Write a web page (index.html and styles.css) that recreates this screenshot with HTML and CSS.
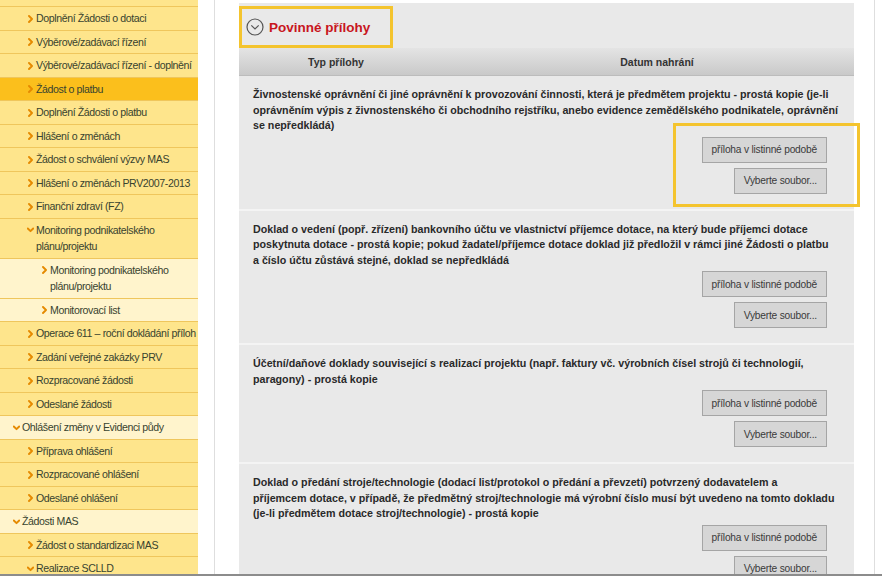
FILE: index.html
```html
<!DOCTYPE html>
<html lang="cs">
<head>
<meta charset="utf-8">
<title>Povinné přílohy</title>
<link rel="stylesheet" href="styles.css">
</head>
<body>
<div class="screen">
  <nav class="sidebar">
    <ul class="menu">
      <li class="item lvl1"><svg class="chev" viewBox="0 0 7 8"><polyline points="2,1 5,4 2,7"/></svg><span>Žádost o dotaci</span></li>
      <li class="item lvl1"><svg class="chev" viewBox="0 0 7 8"><polyline points="2,1 5,4 2,7"/></svg><span>Doplnění Žádosti o dotaci</span></li>
      <li class="item lvl1"><svg class="chev" viewBox="0 0 7 8"><polyline points="2,1 5,4 2,7"/></svg><span>Výběrové/zadávací řízení</span></li>
      <li class="item lvl1"><svg class="chev" viewBox="0 0 7 8"><polyline points="2,1 5,4 2,7"/></svg><span>Výběrové/zadávací řízení - doplnění</span></li>
      <li class="item lvl1 active"><svg class="chev" viewBox="0 0 7 8"><polyline points="2,1 5,4 2,7"/></svg><span>Žádost o platbu</span></li>
      <li class="item lvl1"><svg class="chev" viewBox="0 0 7 8"><polyline points="2,1 5,4 2,7"/></svg><span>Doplnění Žádosti o platbu</span></li>
      <li class="item lvl1"><svg class="chev" viewBox="0 0 7 8"><polyline points="2,1 5,4 2,7"/></svg><span>Hlášení o změnách</span></li>
      <li class="item lvl1"><svg class="chev" viewBox="0 0 7 8"><polyline points="2,1 5,4 2,7"/></svg><span>Žádost o schválení výzvy MAS</span></li>
      <li class="item lvl1"><svg class="chev" viewBox="0 0 7 8"><polyline points="2,1 5,4 2,7"/></svg><span>Hlášení o změnách PRV2007-2013</span></li>
      <li class="item lvl1"><svg class="chev" viewBox="0 0 7 8"><polyline points="2,1 5,4 2,7"/></svg><span>Finanční zdraví (FZ)</span></li>
      <li class="item lvl1 multi"><svg class="chev" viewBox="0 0 7 8"><polyline points="0.8,2.5 3.5,5.2 6.2,2.5"/></svg><span>Monitoring podnikatelského<br>plánu/projektu</span></li>
      <li class="item lvl2 light multi"><svg class="chev" viewBox="0 0 7 8"><polyline points="2,1 5,4 2,7"/></svg><span>Monitoring podnikatelského<br>plánu/projektu</span></li>
      <li class="item lvl2 light"><svg class="chev" viewBox="0 0 7 8"><polyline points="2,1 5,4 2,7"/></svg><span>Monitorovací list</span></li>
      <li class="item lvl1"><svg class="chev" viewBox="0 0 7 8"><polyline points="2,1 5,4 2,7"/></svg><span>Operace 611 – roční dokládání příloh</span></li>
      <li class="item lvl1"><svg class="chev" viewBox="0 0 7 8"><polyline points="2,1 5,4 2,7"/></svg><span>Zadání veřejné zakázky PRV</span></li>
      <li class="item lvl1"><svg class="chev" viewBox="0 0 7 8"><polyline points="2,1 5,4 2,7"/></svg><span>Rozpracované žádosti</span></li>
      <li class="item lvl1"><svg class="chev" viewBox="0 0 7 8"><polyline points="2,1 5,4 2,7"/></svg><span>Odeslané žádosti</span></li>
      <li class="item lvl0 light"><svg class="chev" viewBox="0 0 7 8"><polyline points="0.8,2.5 3.5,5.2 6.2,2.5"/></svg><span>Ohlášení změny v Evidenci půdy</span></li>
      <li class="item lvl1"><svg class="chev" viewBox="0 0 7 8"><polyline points="2,1 5,4 2,7"/></svg><span>Příprava ohlášení</span></li>
      <li class="item lvl1"><svg class="chev" viewBox="0 0 7 8"><polyline points="2,1 5,4 2,7"/></svg><span>Rozpracované ohlášení</span></li>
      <li class="item lvl1"><svg class="chev" viewBox="0 0 7 8"><polyline points="2,1 5,4 2,7"/></svg><span>Odeslané ohlášení</span></li>
      <li class="item lvl0 light"><svg class="chev" viewBox="0 0 7 8"><polyline points="0.8,2.5 3.5,5.2 6.2,2.5"/></svg><span>Žádosti MAS</span></li>
      <li class="item lvl1"><svg class="chev" viewBox="0 0 7 8"><polyline points="2,1 5,4 2,7"/></svg><span>Žádost o standardizaci MAS</span></li>
      <li class="item lvl1"><svg class="chev" viewBox="0 0 7 8"><polyline points="0.8,2.5 3.5,5.2 6.2,2.5"/></svg><span>Realizace SCLLD</span></li>
    </ul>
  </nav>

  <main class="main">
    <section class="card">
      <div class="card-head">
        <h2 class="title-box">
          <svg class="title-icon" viewBox="0 0 18 18"><circle cx="9" cy="9" r="8"/><polyline points="5.3,7.3 9,11 12.7,7.3"/></svg>
          <span>Povinné přílohy</span>
        </h2>
      </div>
      <div class="thead">
        <div class="th">Typ přílohy</div>
        <div class="th th-date">Datum nahrání</div>
      </div>

      <div class="row">
        <p class="doc">Živnostenské oprávnění či jiné oprávnění k provozování činnosti, která je předmětem projektu - prostá kopie (je-li<br>oprávněním výpis z živnostenského či obchodního rejstříku, anebo evidence zemědělského podnikatele, oprávnění<br>se nepředkládá)</p>
        <div class="actions">
          <button class="btn">příloha v listinné podobě</button>
          <button class="btn">Vyberte soubor...</button>
        </div>
      </div>

      <div class="row">
        <p class="doc">Doklad o vedení (popř. zřízení) bankovního účtu ve vlastnictví příjemce dotace, na který bude příjemci dotace<br>poskytnuta dotace - prostá kopie; pokud žadatel/příjemce dotace doklad již předložil v rámci jiné Žádosti o platbu<br>a číslo účtu zůstává stejné, doklad se nepředkládá</p>
        <div class="actions">
          <button class="btn">příloha v listinné podobě</button>
          <button class="btn">Vyberte soubor...</button>
        </div>
      </div>

      <div class="row">
        <p class="doc">Účetní/daňové doklady související s realizací projektu (např. faktury vč. výrobních čísel strojů či technologií,<br>paragony) - prostá kopie</p>
        <div class="actions">
          <button class="btn">příloha v listinné podobě</button>
          <button class="btn">Vyberte soubor...</button>
        </div>
      </div>

      <div class="row">
        <p class="doc">Doklad o předání stroje/technologie (dodací list/protokol o předání a převzetí) potvrzený dodavatelem a<br>příjemcem dotace, v případě, že předmětný stroj/technologie má výrobní číslo musí být uvedeno na tomto dokladu<br>(je-li předmětem dotace stroj/technologie) - prostá kopie</p>
        <div class="actions">
          <button class="btn">příloha v listinné podobě</button>
          <button class="btn">Vyberte soubor...</button>
        </div>
      </div>
    </section>
    <div class="highlight"></div>
  </main>
</div>
</body>
</html>
```

FILE: styles.css
```css
html, body {
  margin: 0;
  padding: 0;
  height: 100%;
}

body {
  font-family: "Liberation Sans", Arial, sans-serif;
  background: #ffffff;
  overflow: hidden;
}

.screen {
  display: flex;
  height: 574px;
  border-bottom: 2px solid #8c8c8c;
  overflow: hidden;
}

/* ---------- sidebar ---------- */
.sidebar {
  width: 198px;
  flex: none;
  background: #fee58c;
  overflow: hidden;
}

.menu {
  list-style: none;
  margin: -16.5px 0 0;
  padding: 0;
}

.item {
  display: flex;
  align-items: flex-start;
  gap: 2px;
  padding: 3px 0 3px 27px;
  line-height: 16.5px;
  font-size: 10.6px;
  letter-spacing: -0.4px;
  color: #38432f;
  white-space: nowrap;
  border-bottom: 1px solid #efc65c;
}

.lvl0 { padding-left: 13px; }
.lvl2 { padding-left: 41px; }

.active { background: #fbbf1c; }
.light { background: #fff4cc; }

.chev {
  flex: none;
  width: 7px;
  height: 8px;
  margin-top: 4.5px;
  fill: none;
  stroke: #e58a00;
  stroke-width: 1.9;
  stroke-linecap: round;
  stroke-linejoin: round;
}

/* ---------- main ---------- */
.main {
  flex: 1;
  position: relative;
  margin: 0 7px 0 16px;
  border-left: 1px solid #dedede;
  border-right: 1px solid #dedede;
  padding: 3px 20px 0 24px;
}

.card {
  background: #e9e9e9;
}

.card-head {
  padding-top: 3px;
}

.title-box {
  box-sizing: border-box;
  width: 154px;
  height: 42px;
  margin: 0;
  border: 3px solid #f4c42e;
  display: flex;
  align-items: center;
  gap: 5px;
  padding-left: 4px;
  font-size: 13.5px;
  font-weight: bold;
  color: #c8161d;
}

.title-icon {
  width: 18px;
  height: 18px;
  flex: none;
  fill: none;
  stroke: #555555;
  stroke-width: 1.2;
}

.thead {
  display: grid;
  grid-template-columns: 194px 1fr;
  align-items: center;
  height: 27px;
  background: linear-gradient(#e4e4e4, #c9c9c9);
  border-bottom: 1px solid #bcbcbc;
  font-size: 10.5px;
  font-weight: bold;
  color: #333333;
  text-align: center;
}

.th-date {
  padding-left: 27px;
}

.row {
  padding: 11px 6px 15px 14px;
  border-bottom: 2px solid #f4f4f4;
}

.doc {
  margin: 0;
  font-size: 10.7px;
  line-height: 15.5px;
  font-weight: bold;
  color: #2a2a2a;
  white-space: nowrap;
}

.actions {
  display: flex;
  flex-direction: column;
  align-items: flex-end;
  gap: 5px;
  margin-top: 3px;
  padding-right: 21px;
}

.btn {
  box-sizing: border-box;
  height: 26px;
  padding: 0 9px;
  font-family: "Liberation Sans", Arial, sans-serif;
  font-size: 10.2px;
  letter-spacing: -0.2px;
  color: #3a3a3a;
  background: #d6d6d6;
  border: 1px solid #a5a5a5;
  border-radius: 0;
}

.highlight {
  position: absolute;
  left: 458px;
  top: 123px;
  width: 187px;
  height: 84px;
  box-sizing: border-box;
  border: 3px solid #f4c42e;
  pointer-events: none;
}
```
